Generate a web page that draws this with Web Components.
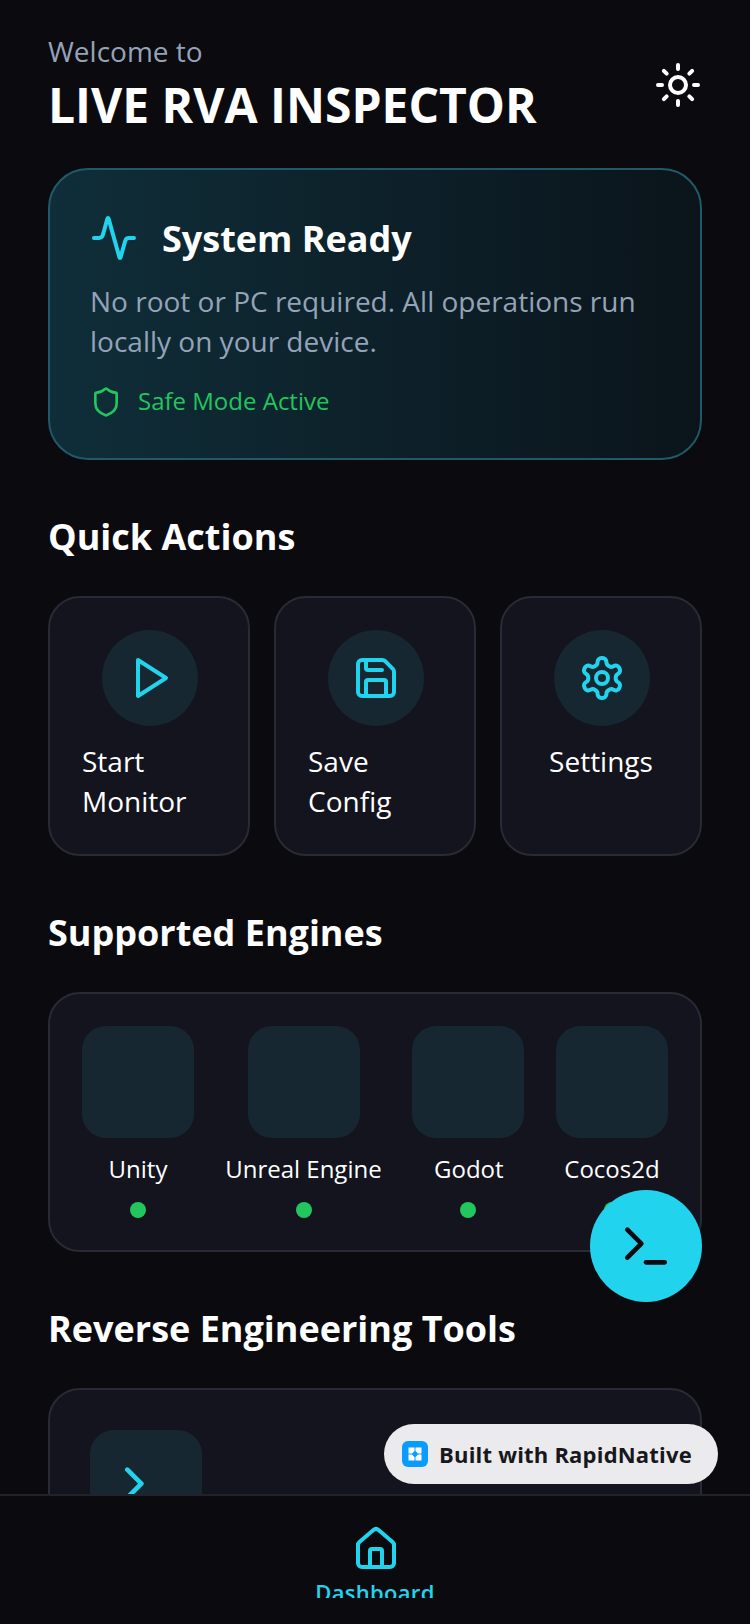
<!DOCTYPE html>
<html lang="en">
<head>
<meta charset="utf-8">
<title>Live RVA Inspector</title>
<style>
  html, body { margin: 0; padding: 0; background: #0a0a0f; }
  body { font-family: "Open Sans", "Liberation Sans", sans-serif; color: #fff; }
</style>
</head>
<body>
<rva-app></rva-app>
<script>
// paths de los iconos (todos en viewBox 24)
const ICONS = {
  sun: '<circle cx="12" cy="12" r="4"/><path d="M12 2v2"/><path d="M12 20v2"/><path d="m4.93 4.93 1.41 1.41"/><path d="m17.66 17.66 1.41 1.41"/><path d="M2 12h2"/><path d="M20 12h2"/><path d="m6.34 17.66-1.41 1.41"/><path d="m19.07 4.93-1.41 1.41"/>',
  activity: '<path d="M22 12h-2.48a2 2 0 0 0-1.93 1.46l-2.35 8.36a.25.25 0 0 1-.48 0L9.24 2.18a.25.25 0 0 0-.48 0l-2.35 8.36A2 2 0 0 1 4.49 12H2"/>',
  shield: '<path d="M20 13c0 5-3.5 7.5-7.66 8.95a1 1 0 0 1-.67-.01C7.5 20.5 4 18 4 13V6a1 1 0 0 1 1-1c2 0 4.5-1.2 6.24-2.72a1.17 1.17 0 0 1 1.52 0C14.51 3.81 17 5 19 5a1 1 0 0 1 1 1z"/>',
  play: '<polygon points="6 3 20 12 6 21 6 3"/>',
  save: '<path d="M15.2 3a2 2 0 0 1 1.4.6l3.8 3.8a2 2 0 0 1 .6 1.4V19a2 2 0 0 1-2 2H5a2 2 0 0 1-2-2V5a2 2 0 0 1 2-2z"/><path d="M17 21v-7a1 1 0 0 0-1-1H8a1 1 0 0 0-1 1v7"/><path d="M7 3v4a1 1 0 0 0 1 1h7"/>',
  settings: '<path d="M12.22 2h-.44a2 2 0 0 0-2 2v.18a2 2 0 0 1-1 1.73l-.43.25a2 2 0 0 1-2 0l-.15-.08a2 2 0 0 0-2.73.73l-.22.38a2 2 0 0 0 .73 2.73l.15.1a2 2 0 0 1 1 1.72v.51a2 2 0 0 1-1 1.74l-.15.09a2 2 0 0 0-.73 2.73l.22.38a2 2 0 0 0 2.73.73l.15-.08a2 2 0 0 1 2 0l.43.25a2 2 0 0 1 1 1.73V20a2 2 0 0 0 2 2h.44a2 2 0 0 0 2-2v-.18a2 2 0 0 1 1-1.73l.43-.25a2 2 0 0 1 2 0l.15.08a2 2 0 0 0 2.73-.73l.22-.39a2 2 0 0 0-.73-2.73l-.15-.08a2 2 0 0 1-1-1.74v-.5a2 2 0 0 1 1-1.74l.15-.09a2 2 0 0 0 .73-2.73l-.22-.38a2 2 0 0 0-2.73-.73l-.15.08a2 2 0 0 1-2 0l-.43-.25a2 2 0 0 1-1-1.73V4a2 2 0 0 0-2-2z"/><circle cx="12" cy="12" r="3"/>',
  terminal: '<polyline points="4 17 10 11 4 5"/><line x1="12" x2="20" y1="19" y2="19"/>',
  home: '<path d="M15 21v-8a1 1 0 0 0-1-1h-4a1 1 0 0 0-1 1v8"/><path d="M3 10a2 2 0 0 1 .709-1.528l7-5.999a2 2 0 0 1 2.582 0l7 5.999A2 2 0 0 1 21 10v9a2 2 0 0 1-2 2H5a2 2 0 0 1-2-2z"/>'
};

class RvaIcon extends HTMLElement {
  constructor () {
    super();
    this.attachShadow({ mode: 'open' });
  }
  connectedCallback () {
    const size = this.getAttribute('size') || 48;
    const color = this.getAttribute('color') || '#22d3ee';
    this.shadowRoot.innerHTML = `
      <style>
        :host { display: block; width: ${size}px; height: ${size}px; flex: none; }
        svg { display: block; }
      </style>
      <svg width="${size}" height="${size}" viewBox="0 0 24 24" fill="none" stroke="${color}" stroke-width="2" stroke-linecap="round" stroke-linejoin="round">${ICONS[this.getAttribute('name')]}</svg>`;
  }
}

// cada elemento pinta su shadow en connectedCallback
class RvaBase extends HTMLElement {
  constructor () {
    super();
    this.attachShadow({ mode: 'open' });
  }
  connectedCallback () {
    this.shadowRoot.innerHTML = this.getTemplate();
  }
}

class RvaHeader extends RvaBase {
  getTemplate () {
    return `
      <style>
        :host { display: flex; align-items: center; justify-content: space-between; margin-bottom: 31px; }
        .welcome { font-size: 28px; line-height: 38px; margin-bottom: 3px; color: #94a3b8; }
        h1 { margin: 0; font-size: 48px; line-height: 64px; font-weight: 700; color: #fff; }
      </style>
      <div>
        <div class="welcome"><slot name="welcome"></slot></div>
        <h1><slot name="title"></slot></h1>
      </div>
      <rva-icon name="sun" color="#ffffff"></rva-icon>`;
  }
}

class RvaHero extends RvaBase {
  getTemplate () {
    return `
      <style>
        :host {
          display: block; padding: 40px; border: 2px solid #20596a; border-radius: 40px;
          background: linear-gradient(90deg, #0f2e39 0%, #0b141b 100%);
        }
        .top { display: flex; align-items: center; gap: 24px; height: 56px; margin-bottom: 15px; }
        .name { margin-top: 2px; font-size: 36px; line-height: 54px; font-weight: 700; color: #fff; }
        .desc { font-size: 28px; line-height: 40px; color: #94a3b8; }
        .safe { display: flex; align-items: center; gap: 16px; margin-top: 25px; font-size: 24px; line-height: 30px; color: #22c55e; }
        .safe span { margin-bottom: 2px; }
      </style>
      <div class="top">
        <rva-icon name="activity"></rva-icon>
        <div class="name"><slot name="name"></slot></div>
      </div>
      <div class="desc"><slot name="desc"></slot></div>
      <div class="safe">
        <rva-icon name="shield" size="32" color="#22c55e"></rva-icon>
        <span><slot name="safe"></slot></span>
      </div>`;
  }
}

class RvaSection extends RvaBase {
  getTemplate () {
    return `
      <style>
        :host { display: block; margin-top: 48px; }
        h2 { margin: 0 0 31px; padding-top: 1px; font-size: 36px; line-height: 56px; font-weight: 700; color: #fff; }
      </style>
      <h2>${this.getAttribute('heading')}</h2>
      <slot></slot>`;
  }
}

class RvaActions extends RvaBase {
  getTemplate () {
    return `
      <style>:host { display: grid; grid-template-columns: repeat(3, 1fr); gap: 24px; }</style>
      <slot></slot>`;
  }
}

class RvaAction extends RvaBase {
  getTemplate () {
    return `
      <style>
        :host {
          display: flex; flex-direction: column; align-items: center; min-width: 0; height: 260px; box-sizing: border-box;
          padding: 32px; border: 2px solid #2a2a35; border-radius: 32px; background: #13141d;
        }
        .circle { width: 96px; height: 96px; margin-left: 2px; margin-bottom: 15px; border-radius: 50%; background: #162731; display: flex; align-items: center; justify-content: center; }
        .label { font-size: 28px; line-height: 40px; color: #fff; }
      </style>
      <div class="circle"><rva-icon name="${this.getAttribute('icon')}"></rva-icon></div>
      <div class="label"><slot></slot></div>`;
  }
}

class RvaCard extends RvaBase {
  getTemplate () {
    return `
      <style>
        :host { display: flex; justify-content: space-between; padding: 32px; border: 2px solid #2a2a35; border-radius: 32px; background: #13141d; }
        :host([tool]) { padding: 40px; height: 200px; box-sizing: border-box; }
      </style>
      <slot></slot>`;
  }
}

class RvaEngine extends RvaBase {
  getTemplate () {
    return `
      <style>
        :host { display: flex; flex-direction: column; align-items: center; }
        .logo { width: 112px; height: 112px; border-radius: 24px; background: #162731; margin-bottom: 15px; }
        .label { font-size: 24px; line-height: 32px; color: #fff; white-space: nowrap; margin-bottom: 17px; }
        .dot { width: 16px; height: 16px; border-radius: 50%; background: #22c55e; }
        .logo, .dot { transform: translateX(var(--nudge, 0)); }
      </style>
      <div class="logo"></div>
      <div class="label"><slot></slot></div>
      <div class="dot"></div>`;
  }
}

class RvaTool extends RvaBase {
  getTemplate () {
    return `
      <style>
        :host { display: flex; align-items: center; justify-content: center; width: 112px; height: 112px; border-radius: 24px; background: #162731; }
      </style>
      <rva-icon name="terminal" size="56"></rva-icon>`;
  }
}

class RvaTabbar extends RvaBase {
  getTemplate () {
    return `
      <style>
        :host { display: flex; justify-content: center; flex: none; height: 130px; box-sizing: border-box; padding-top: 29px; border-top: 2px solid #22222c; background: #0a0a0f; }
        .tab { display: flex; flex-direction: column; align-items: center; height: 73px; overflow: hidden; }
        .tab rva-icon { margin-left: 2px; }
        .label { margin-top: 3px; font-size: 22px; line-height: 32px; font-weight: 600; letter-spacing: .3px; color: #22d3ee; }
      </style>
      <div class="tab">
        <rva-icon name="home"></rva-icon>
        <div class="label"><slot></slot></div>
      </div>`;
  }
}

class RvaFab extends RvaBase {
  getTemplate () {
    return `
      <style>
        :host { position: absolute; left: 590px; top: 1190px; width: 112px; height: 112px; border-radius: 50%; background: #22d3ee; display: flex; align-items: center; justify-content: center; }
      </style>
      <rva-icon name="terminal" size="56" color="#0a0a0f"></rva-icon>`;
  }
}

class RvaBadge extends RvaBase {
  getTemplate () {
    return `
      <style>
        :host {
          position: absolute; left: 384px; top: 1424px; width: 334px; height: 60px; box-sizing: border-box; padding-left: 18px;
          display: flex; align-items: center; gap: 11px; border-radius: 30px; background: #ebebed;
          font-size: 22px; font-weight: 700; letter-spacing: .2px; color: #17171c;
        }
        svg { display: block; flex: none; }
      </style>
      <svg width="26" height="26" viewBox="0 0 26 26">
        <rect width="26" height="26" rx="6" fill="#0a9bff"/>
        <path d="M6.500 6.500h6v3.500l-2.500 2.500H6.500z M13.500 6.500h6v6h-3.500l-2.500-2.500z M6.500 13.500H10l2.500 2.500v3.500h-6z M13.500 16l2.500-2.500h3.500v6h-6z" fill="#fff"/>
      </svg>
      <span><slot></slot></span>`;
  }
}

class RvaApp extends RvaBase {
  getTemplate () {
    return `
      <style>
        :host { display: flex; flex-direction: column; position: relative; width: 750px; height: 1624px; overflow: hidden; background: #0a0a0f; }
        .scroll { flex: 1; min-height: 0; overflow: hidden; padding: 32px 48px 0; }
      </style>
      <div class="scroll">
        <rva-header>
          <span slot="welcome">Welcome to</span>
          <span slot="title">LIVE RVA INSPECTOR</span>
        </rva-header>
        <rva-hero>
          <span slot="name">System Ready</span>
          <span slot="desc">No root or PC required. All operations run locally on your device.</span>
          <span slot="safe">Safe Mode Active</span>
        </rva-hero>
        <rva-section heading="Quick Actions">
          <rva-actions>
            <rva-action icon="play">Start Monitor</rva-action>
            <rva-action icon="save">Save Config</rva-action>
            <rva-action icon="settings">Settings</rva-action>
          </rva-actions>
        </rva-section>
        <rva-section heading="Supported Engines">
          <rva-card>
            <rva-engine>Unity</rva-engine>
            <rva-engine style="--nudge: 1px">Unreal Engine</rva-engine>
            <rva-engine style="--nudge: -1px">Godot</rva-engine>
            <rva-engine>Cocos2d</rva-engine>
          </rva-card>
        </rva-section>
        <rva-section heading="Reverse Engineering Tools">
          <rva-card tool><rva-tool></rva-tool></rva-card>
        </rva-section>
      </div>
      <rva-tabbar>Dashboard</rva-tabbar>
      <rva-fab></rva-fab>
      <rva-badge>Built with RapidNative</rva-badge>`;
  }
}

customElements.define('rva-icon', RvaIcon);
customElements.define('rva-header', RvaHeader);
customElements.define('rva-hero', RvaHero);
customElements.define('rva-section', RvaSection);
customElements.define('rva-actions', RvaActions);
customElements.define('rva-action', RvaAction);
customElements.define('rva-card', RvaCard);
customElements.define('rva-engine', RvaEngine);
customElements.define('rva-tool', RvaTool);
customElements.define('rva-tabbar', RvaTabbar);
customElements.define('rva-fab', RvaFab);
customElements.define('rva-badge', RvaBadge);
customElements.define('rva-app', RvaApp);
</script>
</body>
</html>
